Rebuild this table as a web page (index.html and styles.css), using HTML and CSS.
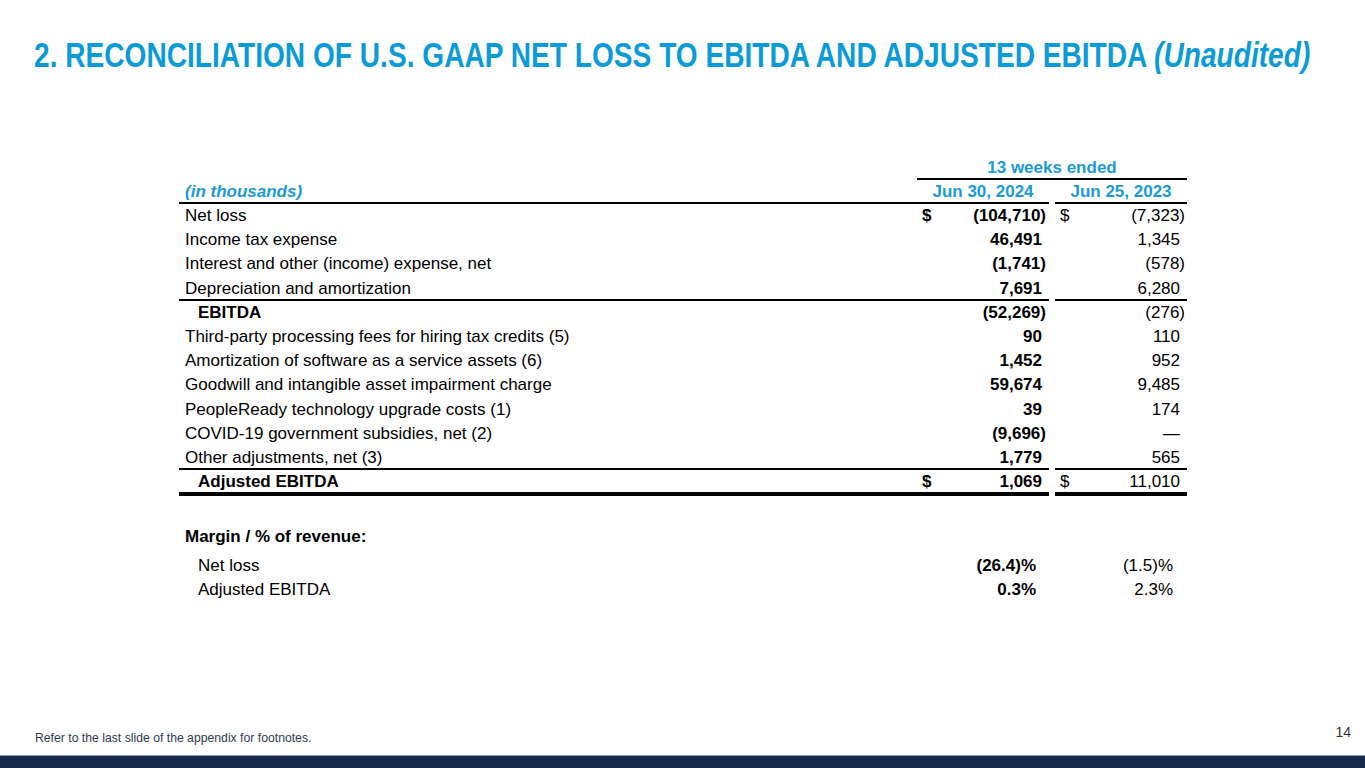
FILE: index.html
```html
<!DOCTYPE html>
<html lang="en">
<head>
<meta charset="utf-8">
<title>Reconciliation of U.S. GAAP Net Loss to EBITDA and Adjusted EBITDA</title>
<link rel="stylesheet" href="styles.css">
</head>
<body>
<div class="slide">
  <h1 class="title"><span class="title-text">2. RECONCILIATION OF U.S. GAAP NET LOSS TO EBITDA AND ADJUSTED EBITDA <em>(Unaudited)</em></span></h1>

  <table class="recon">
    <colgroup>
      <col class="c-label">
      <col class="c-dol">
      <col class="c-val">
      <col class="c-gap">
      <col class="c-dol">
      <col class="c-val">
    </colgroup>
    <thead>
      <tr class="h1">
        <th></th>
        <th colspan="5" class="period">13 weeks ended</th>
      </tr>
      <tr class="h2 rule">
        <th class="units">(in thousands)</th>
        <th colspan="2" class="date">Jun 30, 2024</th>
        <th class="gap"></th>
        <th colspan="2" class="date">Jun 25, 2023</th>
      </tr>
    </thead>
    <tbody>
      <tr>
        <td class="label">Net loss</td>
        <td class="dol b">$</td><td class="num b paren">(104,710)</td>
        <td class="gap"></td>
        <td class="dol">$</td><td class="num paren">(7,323)</td>
      </tr>
      <tr>
        <td class="label">Income tax expense</td>
        <td class="dol"></td><td class="num b">46,491</td>
        <td class="gap"></td>
        <td class="dol"></td><td class="num">1,345</td>
      </tr>
      <tr>
        <td class="label">Interest and other (income) expense, net</td>
        <td class="dol"></td><td class="num b paren">(1,741)</td>
        <td class="gap"></td>
        <td class="dol"></td><td class="num paren">(578)</td>
      </tr>
      <tr class="rule">
        <td class="label">Depreciation and amortization</td>
        <td class="dol"></td><td class="num b">7,691</td>
        <td class="gap"></td>
        <td class="dol"></td><td class="num">6,280</td>
      </tr>
      <tr>
        <td class="label sub">EBITDA</td>
        <td class="dol"></td><td class="num b paren">(52,269)</td>
        <td class="gap"></td>
        <td class="dol"></td><td class="num paren">(276)</td>
      </tr>
      <tr>
        <td class="label">Third-party processing fees for hiring tax credits (5)</td>
        <td class="dol"></td><td class="num b">90</td>
        <td class="gap"></td>
        <td class="dol"></td><td class="num">110</td>
      </tr>
      <tr>
        <td class="label">Amortization of software as a service assets (6)</td>
        <td class="dol"></td><td class="num b">1,452</td>
        <td class="gap"></td>
        <td class="dol"></td><td class="num">952</td>
      </tr>
      <tr>
        <td class="label">Goodwill and intangible asset impairment charge</td>
        <td class="dol"></td><td class="num b">59,674</td>
        <td class="gap"></td>
        <td class="dol"></td><td class="num">9,485</td>
      </tr>
      <tr>
        <td class="label">PeopleReady technology upgrade costs (1)</td>
        <td class="dol"></td><td class="num b">39</td>
        <td class="gap"></td>
        <td class="dol"></td><td class="num">174</td>
      </tr>
      <tr>
        <td class="label">COVID-19 government subsidies, net (2)</td>
        <td class="dol"></td><td class="num b paren">(9,696)</td>
        <td class="gap"></td>
        <td class="dol"></td><td class="num">—</td>
      </tr>
      <tr class="rule">
        <td class="label">Other adjustments, net (3)</td>
        <td class="dol"></td><td class="num b">1,779</td>
        <td class="gap"></td>
        <td class="dol"></td><td class="num">565</td>
      </tr>
      <tr class="total">
        <td class="label sub">Adjusted EBITDA</td>
        <td class="dol b">$</td><td class="num b">1,069</td>
        <td class="gap"></td>
        <td class="dol">$</td><td class="num">11,010</td>
      </tr>
      <tr class="spacer"><td colspan="6"></td></tr>
      <tr class="mhead">
        <td class="label b">Margin / % of revenue:</td>
        <td colspan="5"></td>
      </tr>
      <tr class="mrow first">
        <td class="label sub-n">Net loss</td>
        <td class="dol"></td><td class="pct b">(26.4)%</td>
        <td class="gap"></td>
        <td class="dol"></td><td class="pct alt">(1.5)%</td>
      </tr>
      <tr class="mrow">
        <td class="label sub-n">Adjusted EBITDA</td>
        <td class="dol"></td><td class="pct b">0.3%</td>
        <td class="gap"></td>
        <td class="dol"></td><td class="pct alt">2.3%</td>
      </tr>
    </tbody>
  </table>

  <div class="fill"></div>

  <footer class="foot">
    <span class="note"><span class="note-text">Refer to the last slide of the appendix for footnotes.</span></span>
    <span class="page">14</span>
  </footer>
  <div class="bar"></div>
</div>
</body>
</html>
```

FILE: styles.css
```css
* { box-sizing: border-box; }

html, body {
  margin: 0;
  padding: 0;
  background: #ffffff;
}

body {
  font-family: "Liberation Sans", Arial, sans-serif;
  color: #000;
}

.slide {
  width: 1365px;
  height: 768px;
  overflow: hidden;
  display: flex;
  flex-direction: column;
}

/* ---------- title (condensed Arial look) ---------- */
.title {
  margin: 0;
  padding: 35px 0 0 34px;
  height: 75px;
  font-weight: 700;
  font-size: 35px;
  line-height: 40px;
  color: #0b9bd8;
  white-space: nowrap;
}

.title-text {
  display: inline-block;
  transform: scaleX(0.803);
  transform-origin: left center;
}

.title em {
  font-style: italic;
}

/* ---------- table ---------- */
.recon {
  margin: 81px 0 0 179px;
  width: 1008px;
  table-layout: fixed;
  border-collapse: separate;
  border-spacing: 0;
  font-size: 17px;
}

.c-label { width: 738px; }
.c-dol { width: 18px; }
.c-val { width: 114px; }
.c-gap { width: 6px; }

.recon th,
.recon td {
  padding: 0;
  border: 0;
  height: 24.2px;
  line-height: 24px;
  white-space: nowrap;
  vertical-align: top;
}

.recon thead th {
  height: 24px;
  color: #1a9ad6;
  font-weight: 700;
}

.period {
  text-align: center;
  background: linear-gradient(#000, #000) left bottom / 100% 2px no-repeat;
}

.units {
  text-align: left;
  font-style: italic;
}

.date {
  text-align: center;
}

.rule > th:not(.gap),
.rule > td:not(.gap) {
  background: linear-gradient(#000, #000) left bottom / 100% 2px no-repeat;
}

.recon .total > td {
  height: 26.2px;
}

.total > td:not(.gap) {
  background: linear-gradient(#000, #000) left bottom / 100% 4px no-repeat;
}

.recon .label,
.recon .units {
  padding-left: 6px;
  text-align: left;
}

.recon .label.sub {
  padding-left: 19px;
  font-weight: 700;
}

.recon .label.sub-n {
  padding-left: 19px;
}

.recon .dol {
  padding-left: 5px;
  text-align: left;
}

.recon .num {
  text-align: right;
  padding-right: 7px;
}

.recon .num.paren {
  padding-right: 3px;
}

.recon td:last-child.num.paren {
  padding-right: 2px;
}

.recon .pct {
  text-align: right;
  padding-right: 13px;
}

.recon .pct.alt {
  padding-right: 14px;
}

.b { font-weight: 700; }

.recon .spacer td { height: 29px; }

.recon .mhead td { height: 24px; }

.recon .mrow td { height: 24px; }

.recon .mrow.first td { padding-top: 5px; height: 29px; }

/* ---------- footer ---------- */
.fill { flex: 1; }

.foot {
  display: flex;
  justify-content: space-between;
  align-items: flex-end;
  padding: 0 14px 9px 35px;
}

.note {
  font-size: 13.5px;
  line-height: 16px;
  color: #2f3c4e;
  white-space: nowrap;
}

.note-text {
  display: inline-block;
  transform: scaleX(0.905);
  transform-origin: left center;
}

.page {
  font-size: 14px;
  line-height: 16px;
  margin-bottom: 6px;
  color: #333;
}

.bar {
  height: 13px;
  background: #15294b;
  border-top: 1px solid #8a9bb0;
}
```
